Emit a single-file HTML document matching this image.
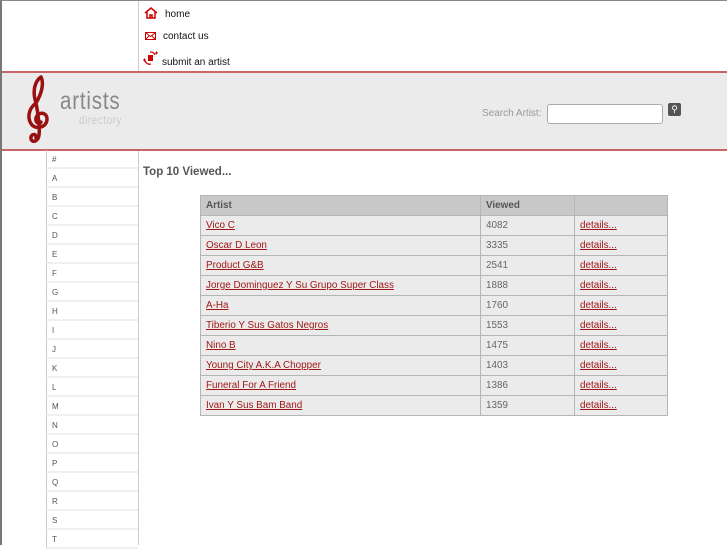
<!DOCTYPE html>
<html><head><style>
*{margin:0;padding:0;box-sizing:border-box}
body{width:727px;height:545px;overflow:hidden;background:#fff;font-family:"Liberation Sans",sans-serif;position:relative}
.frame{position:absolute;left:0;top:0;width:727px;height:545px;border-left:2px solid #777;border-top:1px solid #888}
.vdiv{position:absolute;left:138px;width:1px;background:#ccc}
.nav{position:absolute;left:144px;font-size:10px;color:#111}
.band{position:absolute;left:2px;top:71px;width:725px;height:80px;background:#ebebeb;border-top:2px solid #c96565;border-bottom:2px solid #c96565}
.letters{position:absolute;left:46px;top:150px;width:92px}
.letters div{height:19px;border-left:1px solid #ccc;border-bottom:2px solid #f0f0f3;font-size:8px;color:#555;padding:5px 0 0 5px}
h1{position:absolute;left:143px;top:166px;font-size:11.5px;color:#555;font-weight:bold}
table{position:absolute;left:200px;top:195px;width:468px;border-collapse:collapse;font-size:9.9px}
td{border:1px solid #b5b5b5;height:20px;padding:0 5px;background:#ebebeb;color:#666}
tr.h td{background:#c8c8c8;font-weight:bold;color:#555}
a{color:#a01818;text-decoration:underline}
</style></head><body>
<div class="frame"></div>
<div class="vdiv" style="top:1px;height:70px"></div>
<div class="vdiv" style="top:151px;height:394px"></div>
<div class="nav" style="top:9px;left:165px">home</div>
<svg style="position:absolute;left:144px;top:7px" width="14" height="12" viewBox="0 0 14 12"><path d="M1 6L7 1L13 6M3 5V11H11V5M6 11V8H8V11" fill="none" stroke="#c00" stroke-width="1.5"/></svg>
<div class="nav" style="top:31px;left:163px">contact us</div>
<svg style="position:absolute;left:145px;top:32px" width="11" height="8" viewBox="0 0 11 8"><rect x=".5" y=".5" width="10" height="7" fill="none" stroke="#c00"/><path d="M.5 .5L5.5 4.5L10.5 .5M.5 7.5L4 4M10.5 7.5L7 4" fill="none" stroke="#c00"/></svg>
<div class="nav" style="top:57px;left:162px">submit an artist</div>
<svg style="position:absolute;left:142px;top:51px" width="17" height="15" viewBox="0 0 17 15"><rect x="6" y="4" width="5" height="6" fill="#c00"/><path d="M3 10A5 5 0 0 0 9 13M13 4A5 5 0 0 0 8 1" fill="none" stroke="#c00" stroke-width="1.3"/><path d="M1 9h3M2.5 7.5v3M13 2h3M14.5 .5v3" stroke="#c00"/></svg>
<div class="band">
<svg style="position:absolute;left:22px;top:0px" width="30" height="76" viewBox="0 0 30 76"><path d="M17 4C11 8 8 18 12 30C14 40 16 55 15 62C14 70 6 70 7 64C8 60 13 61 12 65M12 30C4 36 3 46 8 52C13 57 23 54 23 46C23 39 14 38 12 45C11 50 16 52 17 49M17 4C20 10 18 20 12 30" fill="none" stroke="#9a1010" stroke-width="3.5" stroke-linecap="round"/></svg>
<div style="position:absolute;left:58px;top:14px;font-size:25px;color:#888;letter-spacing:1px;transform:scaleX(.82);transform-origin:0 0">artists</div>
<div style="position:absolute;left:77px;top:40px;font-size:12px;color:#ccc;letter-spacing:.5px;transform:scaleX(.85);transform-origin:0 0">directory</div>
<div style="position:absolute;left:480px;top:35px;font-size:10px;color:#999">Search Artist:</div>
<div style="position:absolute;left:545px;top:31px;width:116px;height:20px;background:#fff;border:1px solid #aaa;border-radius:3px"></div>
<div style="position:absolute;left:666px;top:30px;width:13px;height:13px;background:#555;border-radius:2px;color:#fff;font-size:9px;text-align:center;line-height:13px">&#9906;</div>
</div>
<div class="letters">
<div>#</div><div>A</div><div>B</div><div>C</div><div>D</div><div>E</div><div>F</div><div>G</div><div>H</div><div>I</div><div>J</div><div>K</div><div>L</div><div>M</div><div>N</div><div>O</div><div>P</div><div>Q</div><div>R</div><div>S</div><div>T</div>
</div>
<h1>Top 10 Viewed...</h1>
<table>
<tr class="h"><td style="width:280px">Artist</td><td style="width:94px">Viewed</td><td></td></tr>
<tr><td><a>Vico C</a></td><td>4082</td><td><a>details...</a></td></tr>
<tr><td><a>Oscar D Leon</a></td><td>3335</td><td><a>details...</a></td></tr>
<tr><td><a>Product G&amp;B</a></td><td>2541</td><td><a>details...</a></td></tr>
<tr><td><a>Jorge Dominguez Y Su Grupo Super Class</a></td><td>1888</td><td><a>details...</a></td></tr>
<tr><td><a>A-Ha</a></td><td>1760</td><td><a>details...</a></td></tr>
<tr><td><a>Tiberio Y Sus Gatos Negros</a></td><td>1553</td><td><a>details...</a></td></tr>
<tr><td><a>Nino B</a></td><td>1475</td><td><a>details...</a></td></tr>
<tr><td><a>Young City A.K.A Chopper</a></td><td>1403</td><td><a>details...</a></td></tr>
<tr><td><a>Funeral For A Friend</a></td><td>1386</td><td><a>details...</a></td></tr>
<tr><td><a>Ivan Y Sus Bam Band</a></td><td>1359</td><td><a>details...</a></td></tr>
</table>
</body></html>
